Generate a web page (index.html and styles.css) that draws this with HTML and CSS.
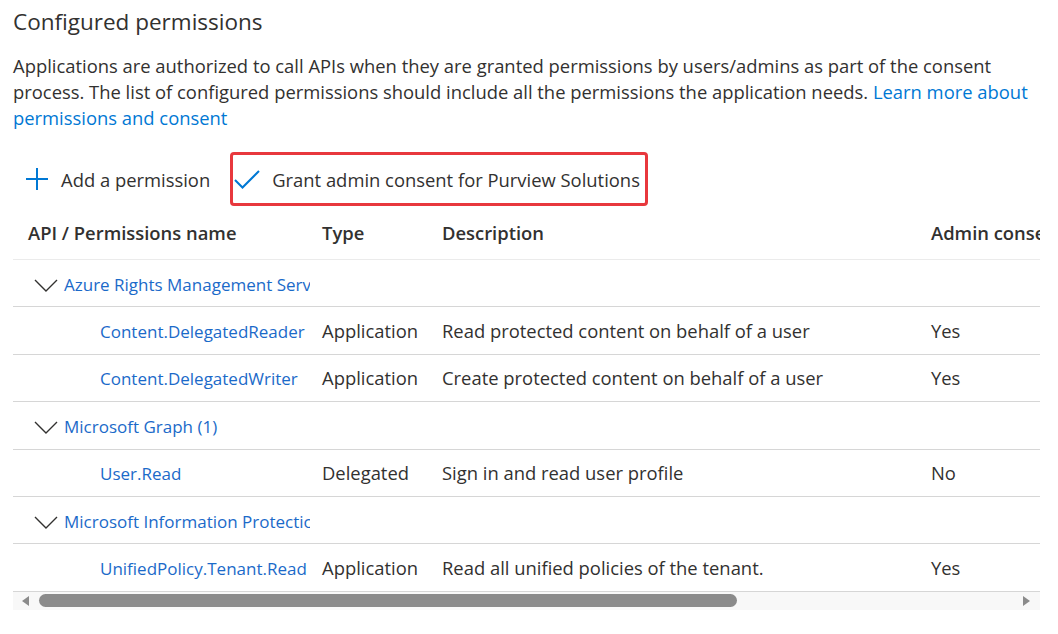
FILE: index.html
```html
<!DOCTYPE html>
<html lang="en">
<head>
  <meta charset="UTF-8" />
  <title>API permissions</title>
  <link rel="stylesheet" href="styles.css">
</head>
<body>
  <h2 class="title">Configured permissions</h2>
  <p class="intro">
    Applications are authorized to call APIs when they are granted permissions by users/admins as part of the consent<br>
    process. The list of configured permissions should include all the permissions the application needs. <a href="#">Learn more about<br>permissions and consent</a>
  </p>

  <div class="toolbar">
    <button class="cmd">
      <svg width="22" height="22" viewBox="0 0 22 22"><path d="M11 0v22M0 11h22" stroke="#0078d4" stroke-width="2" fill="none"/></svg>
      <span>Add a permission</span>
    </button>
    <button class="cmd cmd-grant">
      <svg width="26" height="20" viewBox="0 0 26 20"><path d="M1 11l7.5 7.5L25 2" stroke="#0078d4" stroke-width="2" fill="none"/></svg>
      <span>Grant admin consent for Purview Solutions</span>
    </button>
  </div>

  <div class="grid-wrap">
    <table class="perms">
      <colgroup>
        <col class="c-name"><col class="c-type"><col class="c-desc"><col class="c-admin">
      </colgroup>
      <thead>
        <tr>
          <th class="first">API / Permissions name</th>
          <th>Type</th>
          <th>Description</th>
          <th>Admin consent required</th>
        </tr>
      </thead>
      <tbody>
        <tr class="group">
          <td class="first"><svg class="chev" width="24" height="13" viewBox="0 0 24 13"><path d="M1 1l11 11L23 1" stroke="#323130" stroke-width="1.4" fill="none"/></svg><a href="#">Azure Rights Management Services (2)</a></td>
          <td></td><td></td><td></td>
        </tr>
        <tr>
          <td class="perm"><a href="#">Content.DelegatedReader</a></td>
          <td>Application</td>
          <td>Read protected content on behalf of a user</td>
          <td>Yes</td>
        </tr>
        <tr>
          <td class="perm"><a href="#">Content.DelegatedWriter</a></td>
          <td>Application</td>
          <td>Create protected content on behalf of a user</td>
          <td>Yes</td>
        </tr>
        <tr class="group">
          <td class="first"><svg class="chev" width="24" height="13" viewBox="0 0 24 13"><path d="M1 1l11 11L23 1" stroke="#323130" stroke-width="1.4" fill="none"/></svg><a href="#">Microsoft Graph (1)</a></td>
          <td></td><td></td><td></td>
        </tr>
        <tr>
          <td class="perm"><a href="#">User.Read</a></td>
          <td>Delegated</td>
          <td>Sign in and read user profile</td>
          <td>No</td>
        </tr>
        <tr class="group">
          <td class="first"><svg class="chev" width="24" height="13" viewBox="0 0 24 13"><path d="M1 1l11 11L23 1" stroke="#323130" stroke-width="1.4" fill="none"/></svg><a href="#">Microsoft Information Protection Sync Service (1)</a></td>
          <td></td><td></td><td></td>
        </tr>
        <tr>
          <td class="perm"><a href="#">UnifiedPolicy.Tenant.Read</a></td>
          <td>Application</td>
          <td>Read all unified policies of the tenant.</td>
          <td>Yes</td>
        </tr>
      </tbody>
    </table>
    <div class="hscroll">
      <span class="arrow arrow-left"></span>
      <div class="track"><div class="thumb"></div></div>
      <span class="arrow arrow-right"></span>
    </div>
  </div>
</body>
</html>
```

FILE: styles.css
```css
body {
  margin: 0;
  padding: 0 18px 0 13px;
  background: #fff;
  color: #323130;
  font-family: 'Open Sans', 'Noto Sans', sans-serif;
  font-size: 18.4px;
}
a {
  color: #1b6ac9;
  text-decoration: none;
}
.title {
  margin: 0;
  padding-top: 6px;
  font-size: 22.5px;
  font-weight: 400;
  line-height: 32px;
}
.intro {
  margin: 15px 0 0;
  line-height: 26px;
  white-space: nowrap;
}
.intro a {
  color: #0078d4;
}
.toolbar {
  display: flex;
  align-items: center;
  margin-top: 21px;
  height: 54px;
}
.cmd {
  display: flex;
  align-items: center;
  gap: 13px;
  border: none;
  background: none;
  font: inherit;
  color: #323130;
  padding: 0 0 0 13px;
  height: 54px;
}
.cmd-grant {
  margin-left: 20px;
  padding: 0 5px 0 1px;
  gap: 12px;
  border: 3px solid #e8383d;
  border-radius: 4px;
}
.grid-wrap {
  width: 1027px;
  overflow: hidden;
}
.perms {
  table-layout: fixed;
  border-collapse: collapse;
  width: 1150px;
}
.c-name { width: 297px; }
.c-type { width: 120px; }
.c-desc { width: 489px; }
.c-admin { width: 244px; }
th, td {
  padding: 0 12px;
  text-align: left;
  white-space: nowrap;
  overflow: hidden;
  height: 46.4px;
}
th {
  font-weight: 600;
  height: 53px;
  border-bottom: 1px solid #ebebeb;
}
td {
  border-bottom: 1px solid #d6d6d6;
}
td a {
  font-size: 17px;
}
.first {
  padding-left: 15px;
  padding-right: 3px;
}
.perm {
  padding-left: 87px;
  padding-right: 3px;
}
.group .first {
  padding-left: 21px;
}
.chev {
  margin: 0 6px 0 0;
  vertical-align: -1px;
}
.hscroll {
  display: flex;
  align-items: center;
  height: 18px;
  background: #f8f8f8;
}
.arrow {
  width: 0;
  height: 0;
  border-top: 5px solid transparent;
  border-bottom: 5px solid transparent;
}
.arrow-left {
  border-right: 7px solid #8b8b8b;
  margin: 0 10px 0 9px;
}
.arrow-right {
  border-left: 7px solid #8b8b8b;
  margin: 0 10px 0 9px;
}
.track {
  flex: 1;
}
.thumb {
  width: 698px;
  height: 13px;
  border-radius: 7px;
  background: #8b8b8b;
}
```
